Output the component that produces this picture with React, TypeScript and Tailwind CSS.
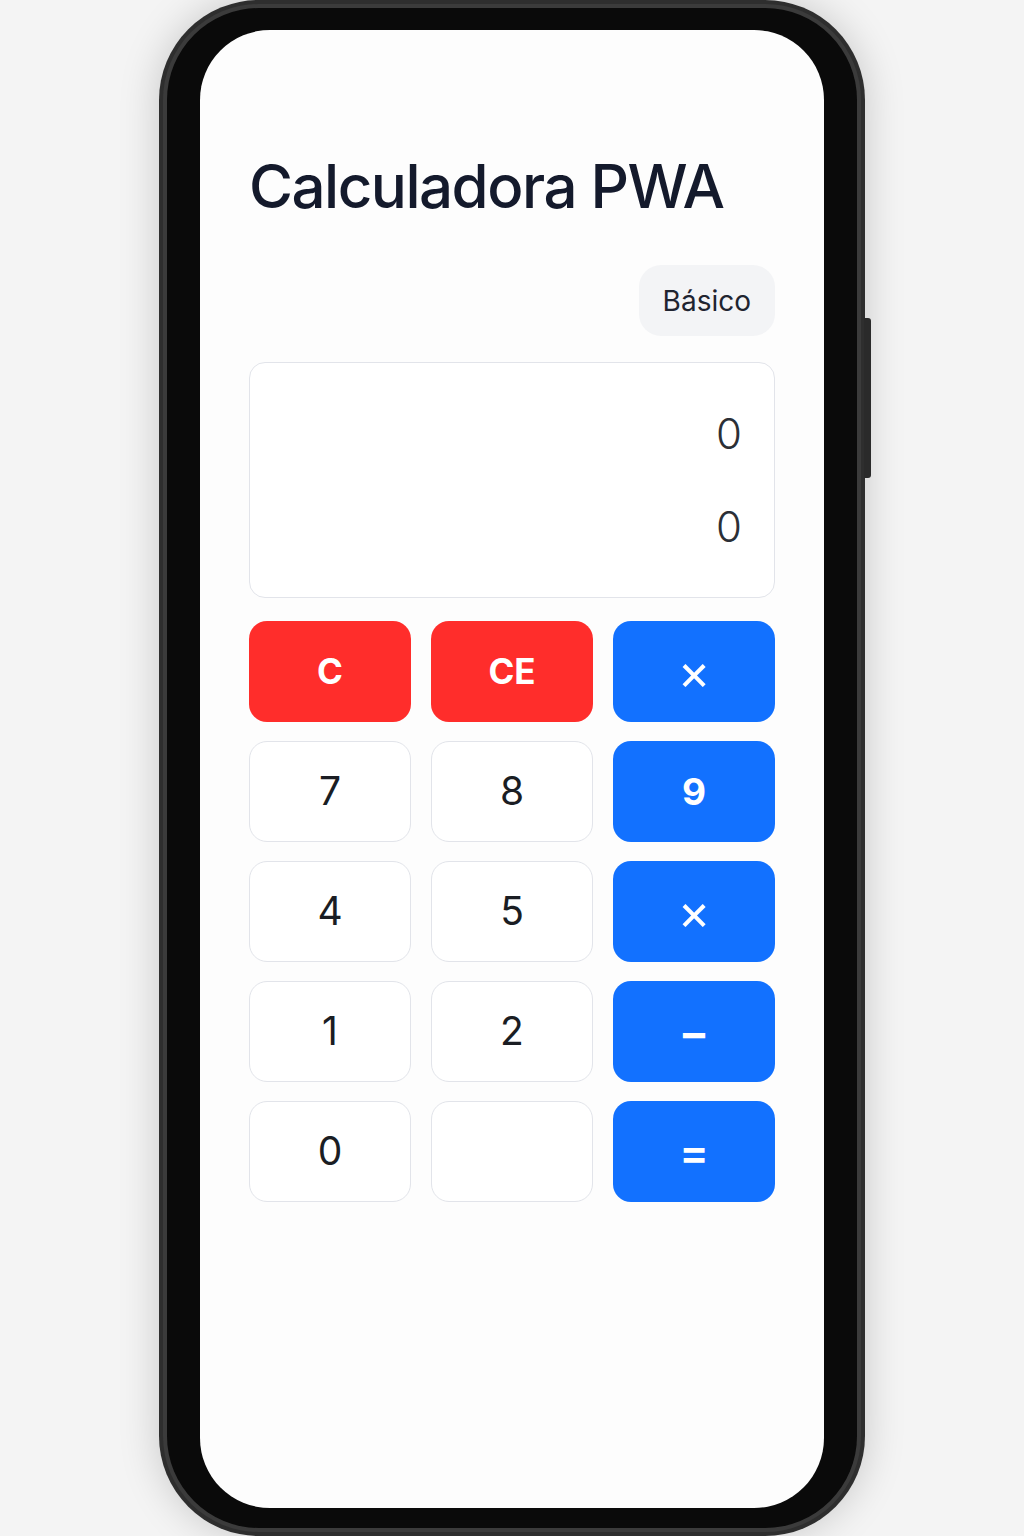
import React, { useState } from 'react';

type Key = {
  label: string;
  kind: 'clear' | 'op' | 'num';
  size?: string;
};

const keys: Key[] = [
  { label: 'C', kind: 'clear' },
  { label: 'CE', kind: 'clear' },
  { label: '×', kind: 'op', size: 'text-[50px] font-normal' },
  { label: '7', kind: 'num' },
  { label: '8', kind: 'num' },
  { label: '9', kind: 'op', size: 'text-[37px] font-bold' },
  { label: '4', kind: 'num' },
  { label: '5', kind: 'num' },
  { label: '×', kind: 'op', size: 'text-[50px] font-normal' },
  { label: '1', kind: 'num' },
  { label: '2', kind: 'num' },
  { label: '−', kind: 'op', size: 'text-[46px] font-semibold' },
  { label: '0', kind: 'num' },
  { label: '', kind: 'num' },
  { label: '=', kind: 'op', size: 'text-[44px] font-semibold' },
];

const App: React.FC = () => {
  const [expression] = useState('0');
  const [result] = useState('0');

  return (
    <div className="h-[1536px] w-full overflow-hidden bg-[#f4f4f4] flex justify-center font-['Inter',sans-serif]">
      {/* Phone frame */}
      <div className="relative w-[706px] h-[1536px] rounded-[100px] bg-[#2e2e2e] p-[4px] shadow-[0_0_40px_rgba(0,0,0,0.18)]">
        <div className="absolute right-[-6px] top-[318px] w-[7px] h-[160px] rounded-r-[3px] bg-[#2a2a2a]" />
        <div className="h-full rounded-[96px] bg-[#3b3b3b] p-[4px]">
          <div className="h-full rounded-[92px] bg-[#0a0a0a] pt-[22px] pb-[20px] px-[33px]">
            {/* Screen */}
            <div className="h-full rounded-[70px] bg-[#fdfdfd] px-[49px] pt-[126px]">
              <h1 className="text-[60px] leading-none font-medium tracking-[-0.025em] text-[#141a2c]">
                Calculadora PWA
              </h1>

              <div className="mt-[49px] flex justify-end">
                <div className="h-[71px] px-[24px] flex items-center rounded-[22px] bg-[#f3f4f6] text-[28px] text-[#1f2430]">
                  Básico
                </div>
              </div>

              <div className="mt-[26px] h-[236px] rounded-2xl border border-[#e2e4ea] bg-white flex flex-col justify-center items-end gap-[45px] pr-8">
                <div className="text-[42px] leading-[48px] font-light text-[#2b2f36]">{expression}</div>
                <div className="text-[42px] leading-[48px] font-light text-[#2b2f36]">{result}</div>
              </div>

              <div className="mt-[23px] grid grid-cols-3 gap-x-5 gap-y-[19px]">
                {keys.map((k, i) => (
                  <button
                    key={i}
                    className={
                      k.kind === 'clear'
                        ? 'h-[101px] rounded-[18px] bg-[#ff2d2b] text-white text-[35px] font-bold flex items-center justify-center'
                        : k.kind === 'op'
                        ? `h-[101px] rounded-[18px] bg-[#1271ff] text-white leading-none flex items-center justify-center ${k.size}`
                        : 'h-[101px] rounded-[18px] bg-white border border-[#e2e4ea] text-[#1a1d23] text-[39px] font-normal flex items-center justify-center'
                    }
                  >
                    {k.label}
                  </button>
                ))}
              </div>
            </div>
          </div>
        </div>
      </div>
    </div>
  );
};

export default App;
